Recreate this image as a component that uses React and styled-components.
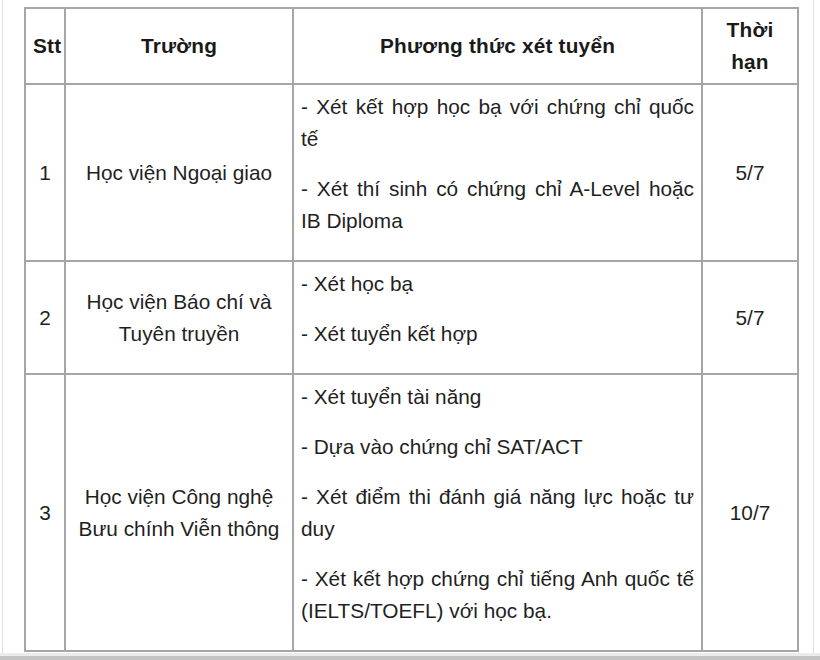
import React from 'react'
import styled, { createGlobalStyle } from 'styled-components'

const GlobalStyle = createGlobalStyle`
    html, body {
        margin: 0;
        padding: 0;
        background: #ffffff;
    }
    body {
        font-family: "Liberation Sans", Arial, sans-serif;
        color: #1f1f1f;
    }
`;

const Page = styled.div`
    width: 820px;
    height: 660px;
    display: flex;
    flex-direction: column;
    overflow: hidden;
    box-sizing: border-box;
`;

const Frame = styled.div`
    flex: 1;
    margin-left: 2px;
    width: 812px;
    box-sizing: border-box;
    border-left: 1px solid #e2e2e2;
    border-right: 1px solid #e2e2e2;
    padding: 7px 0 0 21px;
    overflow: hidden;
`;

const BottomBar = styled.div`
    height: 7px;
    flex-shrink: 0;
    background: linear-gradient(#ececec 0 3px, #c4c4c4 3px);
`;

const Table = styled.table`
    width: 773px;
    table-layout: fixed;
    border-collapse: collapse;
    border: 2px solid #9e9e9e;
    font-size: 20.8px;
    line-height: 32px;
`;

const HeadCell = styled.th`
    border: 2px solid #a6a6a6;
    padding: 5px 7px;
    font-weight: bold;
    text-align: center;
    vertical-align: middle;
    color: #1a1a1a;
    letter-spacing: 0.2px;
`;

const Cell = styled.td`
    border: 2px solid #a6a6a6;
    padding: 6px 7px 5px;
    vertical-align: middle;
    text-align: ${props => props.align || 'center'};
`;

const Para = styled.p`
    margin: 0 0 18px;
    text-align: justify;
`;

const rows = [
    {
        stt: 1,
        school: 'Học viện Ngoại giao',
        methods: [
            '- Xét kết hợp học bạ với chứng chỉ quốc tế',
            '- Xét thí sinh có chứng chỉ A-Level hoặc IB Diploma',
        ],
        deadline: '5/7',
    },
    {
        stt: 2,
        school: 'Học viện Báo chí và Tuyên truyền',
        methods: ['- Xét học bạ', '- Xét tuyển kết hợp'],
        deadline: '5/7',
    },
    {
        stt: 3,
        school: 'Học viện Công nghệ Bưu chính Viễn thông',
        methods: [
            '- Xét tuyển tài năng',
            '- Dựa vào chứng chỉ SAT/ACT',
            '- Xét điểm thi đánh giá năng lực hoặc tư duy',
            '- Xét kết hợp chứng chỉ tiếng Anh quốc tế (IELTS/TOEFL) với học bạ.',
        ],
        deadline: '10/7',
    },
];

function App() {
    return (
        <Page>
            <GlobalStyle />
            <Frame>
                <Table>
                    <colgroup>
                        <col style={{ width: 40 }} />
                        <col style={{ width: 228 }} />
                        <col style={{ width: 409 }} />
                        <col style={{ width: 96 }} />
                    </colgroup>
                    <thead>
                        <tr>
                            <HeadCell>Stt</HeadCell>
                            <HeadCell>Trường</HeadCell>
                            <HeadCell>Phương thức xét tuyển</HeadCell>
                            <HeadCell>Thời hạn</HeadCell>
                        </tr>
                    </thead>
                    <tbody>
                        {rows.map(row => (
                            <tr key={row.stt}>
                                <Cell>{row.stt}</Cell>
                                <Cell>{row.school}</Cell>
                                <Cell align="left">
                                    {row.methods.map(m => (
                                        <Para key={m}>{m}</Para>
                                    ))}
                                </Cell>
                                <Cell>{row.deadline}</Cell>
                            </tr>
                        ))}
                    </tbody>
                </Table>
            </Frame>
            <BottomBar />
        </Page>
    )
}

export default App
